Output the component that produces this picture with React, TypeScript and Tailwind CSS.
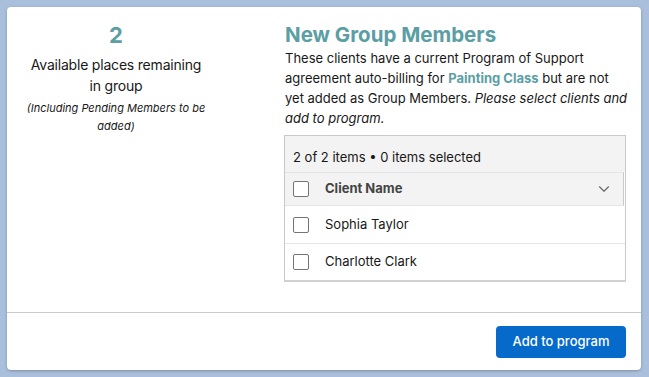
import { ChevronDown } from 'lucide-react'

const CLIENTS = ['Sophia Taylor', 'Charlotte Clark']

function Box() {
  return <span className="block w-4 h-4 rounded-[2px] border border-[#747474] bg-white shrink-0" />
}

export default function App() {
  return (
    <div className="w-[649px] h-[377px] bg-[#a9bfdc] p-[7px] pr-2 font-['Inter',sans-serif] text-[#181818]">
      <div className="flex flex-col h-[363px] bg-white rounded-[4px] shadow-[0_1px_3px_rgba(0,0,0,0.25)]">
        <div className="flex flex-1 pt-[18px]">
          <div className="w-[218px] shrink-0 flex flex-col items-center text-center">
            <div className="text-[22px] leading-[20px] font-bold text-[#5b9ea4]">2</div>
            <p className="mt-[9px] text-[14px] leading-[21px] tracking-[-0.2px] w-[180px]">Available places remaining in group</p>
            <p className="mt-[3px] text-[11px] italic leading-[18px] w-[196px]">(Including Pending Members to be added)</p>
          </div>
          <div className="flex-1 min-w-0 pl-[60px] pr-[15px]">
            <h2 className="text-[20.5px] leading-[22px] font-bold text-[#5b9ea4] -mt-[1px]">New Group Members</h2>
            <p className="mt-[2px] text-[13px] leading-[20px] w-[344px]">
              These clients have a current Program of Support agreement auto-billing for{' '}
              <span className="font-bold text-[#5b9ea4]">Painting Class</span> but are not yet added as Group Members.{' '}
              <em>Please select clients and add to program.</em>
            </p>
            <div className="mt-[7px] -ml-px border border-[#c9c9c9] border-b-2 border-b-[#d0d0d0]">
              <div className="bg-[#f3f3f3] h-[36px] flex items-end pb-[5px] pl-2 text-[13px]">
                2 of 2 items • 0 items selected
              </div>
              <div className="bg-[#f3f3f3] h-[34px] flex items-center border-t border-b border-[#e5e5e5] pl-[8px] pr-[10px] border-r border-r-[#c9c9c9] mr-[1px]">
                <Box />
                <span className="ml-[16px] text-[13px] font-bold text-[#444]">Client Name</span>
                <ChevronDown className="ml-auto w-[18px] h-[18px] text-[#666]" strokeWidth={1.5} />
              </div>
              {CLIENTS.map((c, i) => (
                <div
                  key={c}
                  className={`h-[37px] flex items-center pl-[8px] text-[13px] ${i > 0 ? 'border-t border-[#e5e5e5]' : ''}`}
                >
                  <Box />
                  <span className="ml-[16px]">{c}</span>
                </div>
              ))}
            </div>
          </div>
        </div>
        <div className="border-t border-[#c9c9c9] h-[58px] flex items-center justify-end pr-[15px]">
          <button className="bg-[#066acb] text-white text-[13px] font-medium rounded-[4px] w-[130px] h-[32px]">
            Add to program
          </button>
        </div>
      </div>
    </div>
  )
}
